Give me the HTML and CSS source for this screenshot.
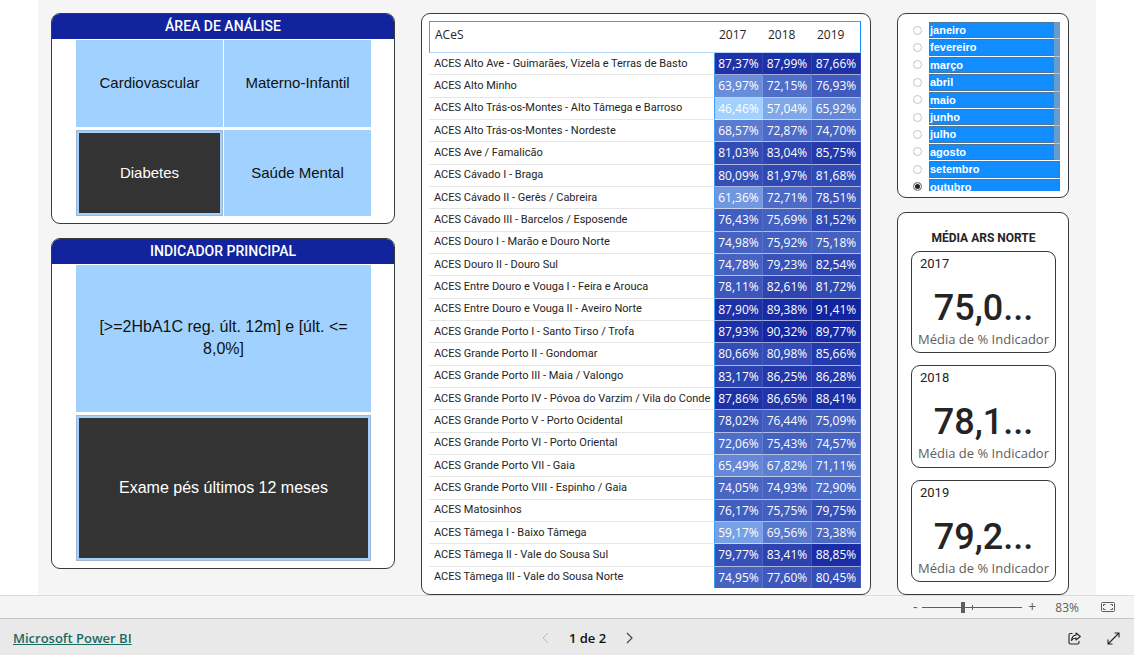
FILE: index.html
```html
<!DOCTYPE html>
<html lang="pt">
<head>
<meta charset="utf-8">
<title>Microsoft Power BI</title>
<link rel="stylesheet" href="styles.css">
</head>
<body>
<main class="canvas">
  <div class="column filters">
    <section class="panel area">
      <h2 class="panel-title">ÁREA DE ANÁLISE</h2>
      <div class="tiles two">
        <button class="tile">Cardiovascular</button>
        <button class="tile">Materno-Infantil</button>
        <button class="tile selected" aria-pressed="true">Diabetes</button>
        <button class="tile">Saúde Mental</button>
      </div>
    </section>
    <section class="panel indicator">
      <h2 class="panel-title">INDICADOR PRINCIPAL</h2>
      <div class="tiles">
        <button class="tile">[&gt;=2HbA1C reg. últ. 12m] e [últ. &lt;= 8,0%]</button>
        <button class="tile selected" aria-pressed="true">Exame pés últimos 12 meses</button>
      </div>
    </section>
  </div>

  <section class="panel matrix">
    <table>
      <thead>
        <tr><th class="name">ACeS</th><th>2017</th><th>2018</th><th>2019</th></tr>
      </thead>
      <tbody>
        <tr><th>ACES Alto Ave - Guimarães, Vizela e Terras de Basto</th><td style="--v:87.37">87,37%</td><td style="--v:87.99">87,99%</td><td style="--v:87.66">87,66%</td></tr>
        <tr><th>ACES Alto Minho</th><td style="--v:63.97">63,97%</td><td style="--v:72.15">72,15%</td><td style="--v:76.93">76,93%</td></tr>
        <tr><th>ACES Alto Trás-os-Montes - Alto Tâmega e Barroso</th><td style="--v:46.46">46,46%</td><td style="--v:57.04">57,04%</td><td style="--v:65.92">65,92%</td></tr>
        <tr><th>ACES Alto Trás-os-Montes - Nordeste</th><td style="--v:68.57">68,57%</td><td style="--v:72.87">72,87%</td><td style="--v:74.70">74,70%</td></tr>
        <tr><th>ACES Ave / Famalicão</th><td style="--v:81.03">81,03%</td><td style="--v:83.04">83,04%</td><td style="--v:85.75">85,75%</td></tr>
        <tr><th>ACES Cávado I - Braga</th><td style="--v:80.09">80,09%</td><td style="--v:81.97">81,97%</td><td style="--v:81.68">81,68%</td></tr>
        <tr><th>ACES Cávado II - Gerês / Cabreira</th><td style="--v:61.36">61,36%</td><td style="--v:72.71">72,71%</td><td style="--v:78.51">78,51%</td></tr>
        <tr><th>ACES Cávado III - Barcelos / Esposende</th><td style="--v:76.43">76,43%</td><td style="--v:75.69">75,69%</td><td style="--v:81.52">81,52%</td></tr>
        <tr><th>ACES Douro I - Marão e Douro Norte</th><td style="--v:74.98">74,98%</td><td style="--v:75.92">75,92%</td><td style="--v:75.18">75,18%</td></tr>
        <tr><th>ACES Douro II - Douro Sul</th><td style="--v:74.78">74,78%</td><td style="--v:79.23">79,23%</td><td style="--v:82.54">82,54%</td></tr>
        <tr><th>ACES Entre Douro e Vouga I - Feira e Arouca</th><td style="--v:78.11">78,11%</td><td style="--v:82.61">82,61%</td><td style="--v:81.72">81,72%</td></tr>
        <tr><th>ACES Entre Douro e Vouga II - Aveiro Norte</th><td style="--v:87.90">87,90%</td><td style="--v:89.38">89,38%</td><td style="--v:91.41">91,41%</td></tr>
        <tr><th>ACES Grande Porto I - Santo Tirso / Trofa</th><td style="--v:87.93">87,93%</td><td style="--v:90.32">90,32%</td><td style="--v:89.77">89,77%</td></tr>
        <tr><th>ACES Grande Porto II - Gondomar</th><td style="--v:80.66">80,66%</td><td style="--v:80.98">80,98%</td><td style="--v:85.66">85,66%</td></tr>
        <tr><th>ACES Grande Porto III - Maia / Valongo</th><td style="--v:83.17">83,17%</td><td style="--v:86.25">86,25%</td><td style="--v:86.28">86,28%</td></tr>
        <tr><th>ACES Grande Porto IV - Póvoa do Varzim / Vila do Conde</th><td style="--v:87.86">87,86%</td><td style="--v:86.65">86,65%</td><td style="--v:88.41">88,41%</td></tr>
        <tr><th>ACES Grande Porto V - Porto Ocidental</th><td style="--v:78.02">78,02%</td><td style="--v:76.44">76,44%</td><td style="--v:75.09">75,09%</td></tr>
        <tr><th>ACES Grande Porto VI - Porto Oriental</th><td style="--v:72.06">72,06%</td><td style="--v:75.43">75,43%</td><td style="--v:74.57">74,57%</td></tr>
        <tr><th>ACES Grande Porto VII - Gaia</th><td style="--v:65.49">65,49%</td><td style="--v:67.82">67,82%</td><td style="--v:71.11">71,11%</td></tr>
        <tr><th>ACES Grande Porto VIII - Espinho / Gaia</th><td style="--v:74.05">74,05%</td><td style="--v:74.93">74,93%</td><td style="--v:72.90">72,90%</td></tr>
        <tr><th>ACES Matosinhos</th><td style="--v:76.17">76,17%</td><td style="--v:75.75">75,75%</td><td style="--v:79.75">79,75%</td></tr>
        <tr><th>ACES Tâmega I - Baixo Tâmega</th><td style="--v:59.17">59,17%</td><td style="--v:69.56">69,56%</td><td style="--v:73.38">73,38%</td></tr>
        <tr><th>ACES Tâmega II - Vale do Sousa Sul</th><td style="--v:79.77">79,77%</td><td style="--v:83.41">83,41%</td><td style="--v:88.85">88,85%</td></tr>
        <tr><th>ACES Tâmega III - Vale do Sousa Norte</th><td style="--v:74.95">74,95%</td><td style="--v:77.60">77,60%</td><td style="--v:80.45">80,45%</td></tr>
      </tbody>
    </table>
  </section>

  <div class="column">
    <section class="panel slicer">
      <div class="months-view">
        <div class="months">
          <label><input type="radio" name="month"><span>janeiro</span></label>
          <label><input type="radio" name="month"><span>fevereiro</span></label>
          <label><input type="radio" name="month"><span>março</span></label>
          <label><input type="radio" name="month"><span>abril</span></label>
          <label><input type="radio" name="month"><span>maio</span></label>
          <label><input type="radio" name="month"><span>junho</span></label>
          <label><input type="radio" name="month"><span>julho</span></label>
          <label><input type="radio" name="month"><span>agosto</span></label>
          <label><input type="radio" name="month"><span>setembro</span></label>
          <label><input type="radio" name="month" checked><span>outubro</span></label>
        </div>
        <div class="scroll-thumb"></div>
      </div>
    </section>
    <section class="panel averages">
      <h2 class="averages-title">MÉDIA ARS NORTE</h2>
      <article class="card"><h3>2017</h3><p class="value">75,0...</p><p class="caption">Média de % Indicador</p></article>
      <article class="card"><h3>2018</h3><p class="value">78,1...</p><p class="caption">Média de % Indicador</p></article>
      <article class="card"><h3>2019</h3><p class="value">79,2...</p><p class="caption">Média de % Indicador</p></article>
    </section>
  </div>
</main>

<div class="zoom-bar">
  <button class="step" aria-label="Reduzir">-</button>
  <input class="zoom" type="range" min="0" max="100" value="40" aria-label="Zoom">
  <button class="step" aria-label="Ampliar">+</button>
  <span class="percent">83%</span>
  <button class="icon" aria-label="Ajustar à página">
    <svg width="14" height="10" viewBox="0 0 14 10" fill="none" stroke="#605e5c"><rect x=".5" y=".5" width="13" height="9" rx="1"/><path d="M2.500 4V2.500H4.500M9.500 2.500H11.500V4M2.500 6V7.500H4.500M9.500 7.500H11.500V6"/></svg>
  </button>
</div>

<footer class="footer">
  <a class="brand" href="#">Microsoft Power BI</a>
  <nav class="pager">
    <button class="icon" aria-label="Página anterior" disabled><svg width="7" height="12" viewBox="0 0 7 12" fill="none" stroke="#bdbbb9"><path d="M6 1L1 6l5 5"/></svg></button>
    <span>1 de 2</span>
    <button class="icon" aria-label="Página seguinte"><svg width="7" height="12" viewBox="0 0 7 12" fill="none" stroke="#484644" stroke-width="1.2"><path d="M1 1l5 5-5 5"/></svg></button>
  </nav>
  <div class="actions">
    <button class="icon" aria-label="Partilhar"><svg width="13" height="13" viewBox="0 0 13 13" fill="none" stroke="#252423" stroke-width="1.1" stroke-linejoin="round"><path d="M4.500 1.500H2.500Q1 1.500 1 3V10.500Q1 12 2.500 12H9.500Q11 12 11 10.500V9"/><path d="M8 1L12.300 4.500L8 8V6Q5 6 3.500 8.500Q4 3.500 8 3Z"/></svg></button>
    <button class="icon" aria-label="Ecrã inteiro"><svg width="13" height="13" viewBox="0 0 13 13" fill="none" stroke="#252423" stroke-width="1.1"><path d="M1 12L12 1M7.500 1H12V5.500M1 7.500V12H5.500"/></svg></button>
  </div>
</footer>
</body>
</html>
```
FILE: styles.css
```css
* { box-sizing: border-box; }

body {
  margin: 0;
  min-height: 100vh;
  display: flex;
  flex-direction: column;
  background: #fff;
  color: #252423;
  font-family: "Open Sans", "Noto Sans", sans-serif;
}

h2, h3, p { margin: 0; }

button {
  border: 0;
  padding: 0;
  background: none;
  color: inherit;
  font: inherit;
}

.canvas {
  flex: 1;
  display: grid;
  grid-template-columns: 344fr 450fr 172fr;
  gap: 26px;
  margin: 0 38px;
  padding: 13px 27px 0 13px;
  background: #f5f5f5;
}

.column {
  display: flex;
  flex-direction: column;
  gap: 14px;
}

.filters { padding-bottom: 26px; }

.panel {
  border: 1px solid #3a3a3a;
  border-radius: 9px;
  background: #fff;
  overflow: hidden;
}

/* Tile slicers */
.area, .indicator {
  display: flex;
  flex-direction: column;
  padding-bottom: 7px;
}

.area { flex: 2 1 211px; }
.indicator { flex: 3 1 331px; }

.panel-title {
  height: 25px;
  background: #12239e;
  color: #fff;
  font: 500 14px/24px Roboto, sans-serif;
  text-align: center;
}

.tiles {
  flex: 1;
  display: grid;
  grid-auto-rows: 1fr;
  gap: 3px 1px;
  padding: 1px 23px 0 24px;
}

.two { grid-template-columns: 1fr 1fr; }

.tile {
  padding: 0 16px;
  background: #a0d1ff;
  color: #111;
  font: 16px/22px "Liberation Sans", Arial, sans-serif;
}

.two .tile { font-size: 15px; }

.tile.selected {
  border: 3px solid #a0d1ff;
  outline: 1px solid #9fb6cc;
  outline-offset: -1px;
  background: #333;
  color: #fff;
}

/* Matrix */
.matrix {
  display: flex;
  padding: 7px 9px 6px 7px;
}

table {
  width: 100%;
  border-collapse: separate;
  border-spacing: 0;
  table-layout: fixed;
}

th {
  padding: 0 0 0 5px;
  font-weight: 400;
  text-align: left;
  white-space: nowrap;
}

thead th {
  width: 49px;
  height: 32px;
  padding-bottom: 6px;
  border-top: 1px solid #3f9df2;
  border-bottom: 1px solid #b5d8fa;
  font-size: 12px;
}

thead .name {
  width: auto;
  border-left: 1px solid #3f9df2;
}

thead th:last-child { border-right: 1px solid #118dff; }

tbody th {
  border-bottom: 1px solid #e6e6e6;
  font-family: Roboto, sans-serif;
  font-size: 11px;
  line-height: 16px;
}

td {
  padding: 1px 0 0;
  border-right: 1px solid rgb(255 255 255 / 10%);
  border-bottom: 1px solid rgb(255 255 255 / 60%);
  background: color-mix(in srgb, #12239e calc((var(--v) - 46.46) / 44.95 * 100%), #a0d1ff);
  color: #fff;
  font-size: 12px;
  line-height: 16px;
  text-align: center;
}

td:nth-child(2) { border-left: 1px solid #3f9df2; }

tbody tr:last-child > * { border-bottom: 0; }

/* Month list */
.slicer { padding: 8px 8px 6px 15px; }

.months-view {
  position: relative;
  height: 169px;
  overflow: hidden;
}

.months {
  display: grid;
  grid-auto-rows: 1fr;
  gap: 1px;
  height: 173px;
}

.months label {
  display: flex;
  align-items: center;
  gap: 7px;
}

.months input {
  appearance: none;
  width: 9px;
  height: 9px;
  margin: 0;
  border: 1px solid #c4c4c4;
  border-radius: 50%;
}

.months input:checked {
  border-color: #8a8a8a;
  background: #222;
  box-shadow: inset 0 0 0 1px #fff;
}

.months span {
  flex: 1;
  align-self: stretch;
  border: 1px solid #4f7598;
  background: #118dff;
  color: #fff;
  font: bold 11px/14px "Liberation Sans", Arial, sans-serif;
}

.scroll-thumb {
  position: absolute;
  top: 0;
  right: 0;
  width: 6px;
  height: 138px;
  background: rgb(150 165 180 / 65%);
}

/* Averages */
.averages {
  flex: 1;
  display: flex;
  flex-direction: column;
  gap: 12px;
  padding: 17px 12px 12px 13px;
}

.averages-title {
  margin-bottom: -7px;
  font: 700 12px/16px Roboto, sans-serif;
  text-align: center;
}

.card {
  flex: 1;
  padding: 4px 0 0;
  border: 1px solid #3a3a3a;
  border-radius: 9px;
  text-align: center;
}

.card h3 {
  padding-left: 8px;
  font: 400 13px/16px Roboto, sans-serif;
  text-align: left;
}

.value {
  padding-top: 8px;
  font: 500 36px/56px Roboto, sans-serif;
}

.caption {
  margin-top: -5px;
  color: #605e5c;
  font-size: 13px;
  line-height: 16px;
  white-space: nowrap;
}

/* Bottom bars */
.zoom-bar {
  display: flex;
  align-items: center;
  justify-content: flex-end;
  height: 23px;
  padding-right: 19px;
  border-top: 1px solid #dcdcdc;
  background: #f4f4f4;
  color: #605e5c;
  font-size: 12px;
}

.step {
  width: 14px;
  font-size: 14px;
  line-height: 16px;
}

.zoom {
  appearance: none;
  width: 100px;
  height: 12px;
  margin: 0 3px 0 0;
  background:
    linear-gradient(#605e5c, #605e5c) center / 1px 5px no-repeat,
    linear-gradient(#605e5c, #605e5c) center / 100% 1px no-repeat;
}

.zoom::-webkit-slider-thumb {
  appearance: none;
  width: 4px;
  height: 11px;
  background: #605e5c;
}

.percent { margin: 0 22px 0 16px; }

.icon { display: flex; }

.footer {
  display: grid;
  grid-template-columns: 1fr auto 1fr;
  align-items: center;
  height: 37px;
  padding: 2px 14px 0 13px;
  border-top: 1px solid #c8c6c4;
  background: #e9e9e9;
}

.brand {
  color: #1a6b62;
  font-size: 13px;
  font-weight: 600;
}

.pager {
  display: flex;
  align-items: center;
  gap: 20px;
  padding-left: 42px;
  color: #111;
  font-size: 13px;
  font-weight: 600;
}

.actions {
  display: flex;
  align-items: center;
  justify-content: flex-end;
  gap: 26px;
}
```
